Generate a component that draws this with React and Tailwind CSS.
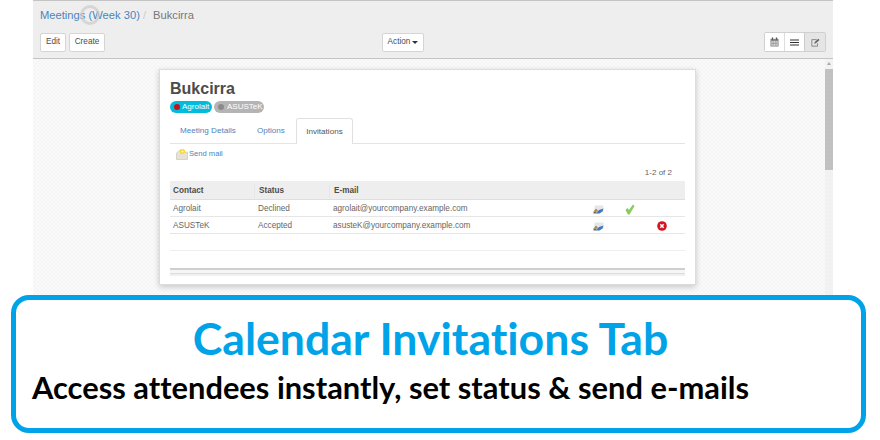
function CalendarIcon() {
  return (
    <svg width="9" height="10" viewBox="0 0 10 11">
      <rect x="0.5" y="2" width="9" height="8.5" fill="#888" />
      <rect x="2" y="0.5" width="1.5" height="2.5" fill="#555" />
      <rect x="6.5" y="0.5" width="1.5" height="2.5" fill="#555" />
      <path d="M1.5 4.5h7v5h-7z" fill="#ddd" />
      <path d="M3.5 4.5v5M6.5 4.5v5M1.5 7h7" stroke="#888" strokeWidth="0.8" />
    </svg>
  );
}

function ListIcon() {
  return (
    <svg width="9" height="7" viewBox="0 0 9 7">
      <path d="M0 1h9M0 3.5h9M0 6h9" stroke="#333" strokeWidth="1.1" />
    </svg>
  );
}

function EditIcon() {
  return (
    <svg width="9" height="9" viewBox="0 0 11 10">
      <path d="M7 1.5H1v8h7V6" fill="none" stroke="#888" strokeWidth="1.2" />
      <path d="M4 6.5l.5-2L9 0.5l1.5 1.5L6 6z" fill="#666" />
    </svg>
  );
}

function MailIcon() {
  return (
    <svg width="12" height="12" viewBox="0 0 12 12">
      <path d="M0.5 5L4 2h4v2h3.5v7.5H0.5z" fill="#e6e2d6" stroke="#c4c0b2" strokeWidth="0.6" />
      <circle cx="6.5" cy="3.5" r="2.6" fill="#f3dc3a" />
      <circle cx="6.5" cy="3.5" r="1" fill="#fff6c0" />
    </svg>
  );
}

function PhotoIcon() {
  return (
    <svg width="11" height="9" viewBox="0 0 11 9">
      <rect x="1.5" y="0.5" width="9" height="6" fill="#e4e6ea" />
      <path d="M0.5 6.5l2.5-3 2.5 3z" fill="#b08a3c" />
      <path d="M0.5 6.5h3v2h-3z" fill="#6d6a5c" />
      <path d="M3 8.5l3-3.5 4.5-1.5-1 3-3 2z" fill="#3f76c4" />
    </svg>
  );
}

function CheckIcon() {
  return (
    <svg width="10" height="11" viewBox="0 0 10 11">
      <path d="M0.5 6l2-2 1.5 2L8 0.5l1.5 1.5L4.5 10.5h-1.5z" fill="#84cc5c" />
    </svg>
  );
}

function CancelIcon() {
  return (
    <svg width="10" height="10" viewBox="0 0 10 10">
      <circle cx="5" cy="5" r="4.8" fill="#d8121f" />
      <path d="M3.3 3.3l3.4 3.4M6.7 3.3l-3.4 3.4" stroke="#fff" strokeWidth="1.5" />
    </svg>
  );
}

function Button({ children, className = '' }) {
  return (
    <div className={`h-[19px] pt-px flex items-center justify-center bg-white border border-[#d5d5d5] rounded-[2px] text-[8.2px] text-[#4c4c4c] ${className}`}>
      {children}
    </div>
  );
}

function Row({ contact, status, email, check, cancel }) {
  return (
    <div className="h-[17px] pt-[3px] flex items-center border-b border-[#e6e6e6] text-[8.2px] text-[#666]">
      <div className="w-[84px] pl-[3px]">{contact}</div>
      <div className="w-[75px] pl-[4px]">{status}</div>
      <div className="w-[253px] pl-[4px]">{email}</div>
      <div className="w-[32px] flex justify-center"><PhotoIcon /></div>
      <div className="w-[32px] flex justify-center">{check && <CheckIcon />}</div>
      <div className="w-[32px] flex justify-center">{cancel && <CancelIcon />}</div>
    </div>
  );
}

export default function App() {
  return (
    <div className="w-[880px] h-[440px] bg-white flex flex-col overflow-hidden font-['Liberation_Sans',Arial,sans-serif]">
      <div className="ml-[33px] w-[800px] h-[295px] flex flex-col shrink-0">
        <header className="relative h-[59px] bg-[#efeeef] border-t border-b border-[#c4c4c4] px-[7px]">
          <div className="h-[31px] pb-[3px] flex items-center text-[11.2px]">
            <span className="text-[#4c84bd]">Meetings (Week 30)</span>
            <span className="text-[#ccc] ml-[3px]">/</span>
            <span className="text-[#777] ml-[7px]">Bukcirra</span>
          </div>
          <div className="absolute left-[47px] top-[4px] w-[20px] h-[20px] rounded-full border-[3px] border-[#ccc]/70" />
          <div className="flex items-center">
            <Button className="w-[26px]">Edit</Button>
            <Button className="w-[36px] ml-[3px]">Create</Button>
            <Button className="w-[42px] ml-[277px]">
              Action
              <span className="ml-[2px] w-0 h-0 border-x-[3px] border-x-transparent border-t-[3px] border-t-[#333]" />
            </Button>
            <div className="ml-auto mr-0 flex border border-[#d0d0d0] rounded-[2px]">
              <div className="w-[20px] h-[18px] bg-white border-r border-[#ddd] flex items-center justify-center"><CalendarIcon /></div>
              <div className="w-[20px] h-[18px] bg-white border-r border-[#ccc] flex items-center justify-center"><ListIcon /></div>
              <div className="w-[20px] h-[18px] bg-[#e5e5e5] flex items-center justify-center"><EditIcon /></div>
            </div>
          </div>
        </header>

        <main className="relative flex-1 flex justify-start pl-[126px] pt-[10px] bg-[#f7f7f7] bg-[repeating-conic-gradient(#f5f5f5_0_25%,#fafafa_0_50%)] bg-[length:4px_4px]">
          <div className="w-[537px] h-[216px] bg-white border border-[#dcdcdc] shadow-[0_2px_6px_rgba(0,0,0,0.2)] pl-[10px] pr-[10px] pt-[10px]">
            <h1 className="text-[16px] leading-[18px] font-bold text-[#4c4c4c]">Bukcirra</h1>
            <div className="mt-[3px] flex gap-[2px] text-[8px] leading-[11px] text-white">
              <div className="w-[42px] h-[11.5px] rounded-full bg-[#00bcdc] flex items-center pl-[4px] gap-[2px]">
                <span className="w-[6px] h-[6px] rounded-full bg-[#c8101c]" />
                Agrolait
              </div>
              <div className="w-[50px] h-[11.5px] rounded-full bg-[#b4b4b4] flex items-center pl-[4px] gap-[3px]">
                <span className="w-[6px] h-[6px] rounded-full bg-[#8a8a8a]" />
                ASUSTeK
              </div>
            </div>

            <div className="mt-[5px] h-[26px] flex border-b border-[#e4e4e4] text-[8.1px]">
              <div className="w-[75px] pl-[10px] pt-[2px] flex items-center text-[#4c84bd]">Meeting Details</div>
              <div className="w-[51px] pl-[12px] pt-[2px] flex items-center text-[#4c84bd]">Options</div>
              <div className="w-[57px] h-[26px] pt-[2px] flex items-center justify-center bg-white border border-b-0 border-[#e0e0e0] rounded-t-[3px] text-[#555]">Invitations</div>
            </div>

            <div className="mt-[4px] ml-[6px] h-[12px] flex items-center gap-[1px] text-[7.6px] text-[#4c84bd]">
              <MailIcon />
              Send mail
            </div>

            <div className="mt-[6px] h-[14px] pr-[13px] flex items-center justify-end text-[8px] text-[#666]">1-2 of 2</div>

            <div className="mt-[1px] w-[515px]">
              <div className="h-[19px] pt-[4px] flex items-center bg-[#eeeeee] border-b border-[#dedede] text-[8.2px] font-bold text-[#4c4c4c]">
                <div className="w-[84px] pl-[3px]">Contact</div>
                <div className="w-[75px] pl-[4px] border-l border-[#e6e6e6]">Status</div>
                <div className="pl-[4px] border-l border-[#e6e6e6]">E-mail</div>
              </div>
              <Row contact="Agrolait" status="Declined" email="agrolait@yourcompany.example.com" check />
              <Row contact="ASUSTeK" status="Accepted" email="asusteK@yourcompany.example.com" cancel />
              <div className="h-[17px] border-b border-[#eeeeee]" />
              <div className="h-[17px]" />
              <div className="h-[6px] border-t-2 border-b border-t-[#cfcfcf] border-b-[#dddddd] bg-[#f6f6f6]" />
              <div className="h-[2px] bg-[#f0f0f0]" />
            </div>
          </div>

          <div className="absolute right-0 top-0 bottom-0 w-[8px] flex flex-col items-center bg-[#f2f2f2]">
            <span className="mt-[3px] w-0 h-0 border-x-[2.5px] border-x-transparent border-b-[3px] border-b-[#aaa]" />
            <div className="mt-[4px] w-[8px] h-[101px] bg-[#c1c1c1]" />
          </div>
        </main>
      </div>

      <div className="ml-[11px] w-[855px] h-[138px] bg-white border-[5px] border-[#00a3e8] rounded-[18px] flex flex-col font-['Lato',sans-serif] font-bold [font-variant-ligatures:none]">
        <div className="mt-[13px] pr-[16px] text-center text-[44.6px] leading-[50px] text-[#00a3e8]">Calendar Invitations Tab</div>
        <div className="mt-[6px] ml-[16px] text-[30.85px] leading-[38px] text-black">Access attendees instantly, set status &amp; send e-mails</div>
      </div>
    </div>
  );
}
